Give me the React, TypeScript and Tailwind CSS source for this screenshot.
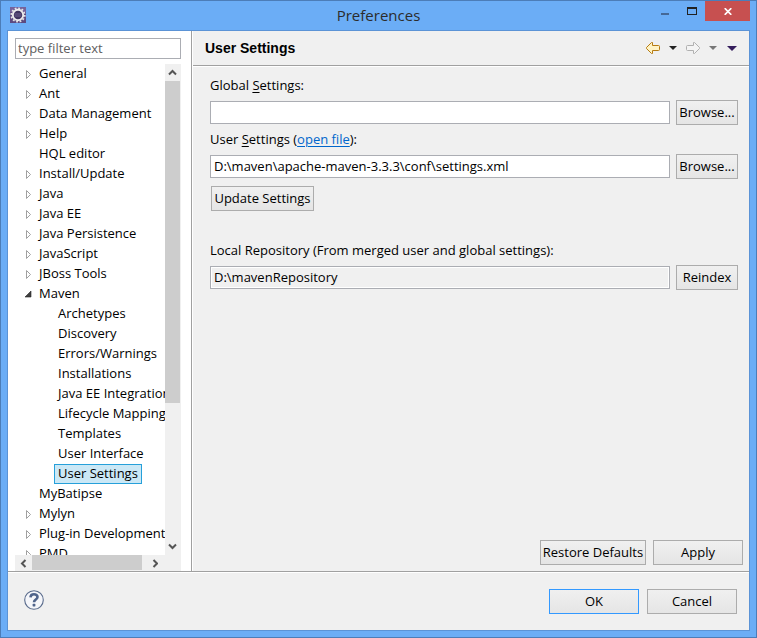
import { useState } from "react";
import type { ButtonHTMLAttributes } from "react";

type NodeState = "closed" | "open" | "leaf";
type TreeEntry = { label: string; state: NodeState; child?: boolean };

const entries: TreeEntry[] = [
  { label: "General", state: "closed" },
  { label: "Ant", state: "closed" },
  { label: "Data Management", state: "closed" },
  { label: "Help", state: "closed" },
  { label: "HQL editor", state: "leaf" },
  { label: "Install/Update", state: "closed" },
  { label: "Java", state: "closed" },
  { label: "Java EE", state: "closed" },
  { label: "Java Persistence", state: "closed" },
  { label: "JavaScript", state: "closed" },
  { label: "JBoss Tools", state: "closed" },
  { label: "Maven", state: "open" },
  { label: "Archetypes", state: "leaf", child: true },
  { label: "Discovery", state: "leaf", child: true },
  { label: "Errors/Warnings", state: "leaf", child: true },
  { label: "Installations", state: "leaf", child: true },
  { label: "Java EE Integration", state: "leaf", child: true },
  { label: "Lifecycle Mappings", state: "leaf", child: true },
  { label: "Templates", state: "leaf", child: true },
  { label: "User Interface", state: "leaf", child: true },
  { label: "User Settings", state: "leaf", child: true },
  { label: "MyBatipse", state: "leaf" },
  { label: "Mylyn", state: "closed" },
  { label: "Plug-in Development", state: "closed" },
  { label: "PMD", state: "closed" },
];

function PushButton({ className = "", ...rest }: ButtonHTMLAttributes<HTMLButtonElement>) {
  return (
    <button
      type="button"
      className={`h-[25px] shrink-0 whitespace-nowrap border bg-linear-to-b from-[#f0f0f0] to-[#e5e5e5] pb-px text-center leading-5 ${className}`}
      {...rest}
    />
  );
}

function Twisty({ state }: { state: NodeState }) {
  return (
    <svg width="10" height="10" viewBox="0 0 10 10" className="shrink-0" aria-hidden="true">
      {state === "closed" && <path d="M3.5 1.5v8l4-4z" fill="#fff" stroke="#a0a0a0" />}
      {state === "open" && <path d="M8 2v6H2z" fill="#404040" stroke="#262626" strokeWidth=".6" />}
    </svg>
  );
}

function Chevron({ d, label, className }: { d: string; label: string; className: string }) {
  return (
    <button type="button" aria-label={label} className={`flex shrink-0 items-center justify-center bg-[#f0f0f0] ${className}`}>
      <svg width="9" height="9" viewBox="0 0 9 9" fill="none" stroke="#555" strokeWidth="2" aria-hidden="true">
        <path d={d} />
      </svg>
    </button>
  );
}

function EclipseLogo() {
  return (
    <svg width="16" height="16" viewBox="0 0 16 16" aria-hidden="true">
      <rect width="16" height="16" fill="#5d4a80" />
      <rect width="16" height="5" fill="#75639b" />
      <circle cx="8" cy="8" r="6.7" fill="none" stroke="#e4e4e4" strokeWidth="1.8" strokeDasharray="1.8 1.708" />
      <circle cx="8" cy="8" r="5.2" fill="#40345f" stroke="#ecebec" strokeWidth="1.9" />
      <path d="M4.5 7h7M4.5 9h7" stroke="#6e6190" />
    </svg>
  );
}

function ToolArrow({ back = false }: { back?: boolean }) {
  return (
    <svg width="16" height="14" viewBox="0 0 16 14" strokeLinejoin="round" aria-hidden="true">
      {back ? (
        <path d="M7.5 1.5v3h6a1 1 0 0 1 1 1v3a1 1 0 0 1-1 1h-6v3h-1l-5-5v-1l5-5z" fill="#fff3c4" stroke="#b67b12" />
      ) : (
        <path d="M8.5 1.5v3h-6a1 1 0 0 0-1 1v3a1 1 0 0 0 1 1h6v3h1l5-5v-1l-5-5z" fill="#f4f4f4" stroke="#b0b0b0" />
      )}
    </svg>
  );
}

function DropMark({ fill }: { fill: string }) {
  return (
    <svg width="8" height="4" viewBox="0 0 8 4" aria-hidden="true">
      <path d="M0 0h8L4 4z" fill={fill} />
    </svg>
  );
}

const field = "h-[23px] min-w-0 flex-1 border border-[#abadb3] px-[3px] pb-px leading-5 outline-none";

export default function App() {
  const [filter, setFilter] = useState("");
  const [globalFile, setGlobalFile] = useState("");
  const [userFile, setUserFile] = useState("D:\\maven\\apache-maven-3.3.3\\conf\\settings.xml");
  const [selected, setSelected] = useState("User Settings");

  return (
    <div className="flex h-screen flex-col border border-[#4c7db8] bg-[#6badf6] font-['Open_Sans','Noto_Sans',sans-serif] text-[13px] leading-5 text-black">
      <header className="flex h-[29px] shrink-0 items-center">
        <div className="flex w-[150px] pb-px pl-[9px]">
          <EclipseLogo />
        </div>
        <h1 className="flex-1 pb-px text-center text-[15px] text-[#2c2c2c]">Preferences</h1>
        <div className="flex w-[150px] justify-end self-start pr-[6px]">
          <button type="button" aria-label="Minimize" className="flex h-5 w-[27px] items-center justify-center">
            <svg width="8" height="8" viewBox="0 0 8 8" aria-hidden="true">
              <path d="M0 6h8v2H0z" fill="#456896" />
            </svg>
          </button>
          <button type="button" aria-label="Maximize" className="flex h-5 w-[27px] items-center justify-center">
            <svg width="10" height="8" viewBox="0 0 10 8" aria-hidden="true">
              <path d="M0 0h10v8H0zM1 2v5h8V2z" fill="#222" fillRule="evenodd" />
            </svg>
          </button>
          <button type="button" aria-label="Close" className="flex h-5 w-[45px] items-center justify-center bg-[#c75050]">
            <svg width="8" height="7" viewBox="0 0 8 7" aria-hidden="true">
              <path d="M.7.2l6.6 6.6M7.3.2L.7 6.8" stroke="#fff" strokeWidth="1.7" />
            </svg>
          </button>
        </div>
      </header>

      <div className="mx-[6px] mb-[6px] flex min-h-0 flex-1 flex-col border border-[#5b93d6] bg-[#f0f0f0]">
        <div className="flex min-h-0 flex-1">
          <nav className="flex w-[184px] shrink-0 flex-col border-r border-[#a0a0a0] bg-white pl-[7px] pr-[10px] pt-[7px]">
            <input
              aria-label="type filter text"
              placeholder="type filter text"
              value={filter}
              onChange={(e) => setFilter(e.target.value)}
              className="mb-[5px] h-[21px] w-full shrink-0 border border-[#abadb3] px-[2px] pb-px leading-[18px] outline-none placeholder:text-[#606060]"
            />
            <div className="flex min-h-0 flex-1">
              <div className="flex min-w-0 flex-1 flex-col">
                <ul className="min-h-0 flex-1 overflow-hidden">
                  {entries.map((e) => (
                    <li key={e.label} className={`flex h-5 items-center ${e.child ? "pl-[29px]" : "pl-2"}`}>
                      <Twisty state={e.state} />
                      <button
                        type="button"
                        onClick={() => setSelected(e.label)}
                        className={`h-5 whitespace-nowrap border px-[3px] pb-px leading-[17px] ${e.child ? "" : "ml-[2px]"} ${
                          selected === e.label ? "border-[#26a0da] bg-[#cbe8f6]" : "border-transparent"
                        }`}
                      >
                        {e.label}
                      </button>
                    </li>
                  ))}
                </ul>
                <div className="flex h-4 shrink-0 bg-[#f0f0f0]">
                  <Chevron d="M6.5 1L3 4.5 6.5 8" label="Scroll left" className="w-[17px]" />
                  <div className="mb-px w-[110px] bg-[#cdcdcd]" />
                  <Chevron d="M4.5 1L8 4.5 4.5 8" label="Scroll right" className="flex-1" />
                </div>
              </div>
              <div className="flex w-4 shrink-0 flex-col bg-[#f0f0f0] pb-4">
                <Chevron d="M1 6.5L4.5 3 8 6.5" label="Scroll up" className="mr-px h-[17px]" />
                <div className="mr-px h-[322px] bg-[#cdcdcd]" />
                <Chevron d="M1 2.5L4.5 6 8 2.5" label="Scroll down" className="mr-px mt-auto h-[17px]" />
              </div>
            </div>
          </nav>

          <main className="flex min-w-0 flex-1 flex-col border-l border-white">
            <div className="flex h-[35px] shrink-0 items-center justify-between border-b border-[#a0a0a0] pl-3 pr-3">
              <h2 className="font-['Liberation_Sans',sans-serif] text-[14px] font-bold">User Settings</h2>
              <div className="flex items-center gap-2">
                <button type="button" aria-label="Back"><ToolArrow back /></button>
                <button type="button" aria-label="Back history"><DropMark fill="#222" /></button>
                <button type="button" aria-label="Forward"><ToolArrow /></button>
                <button type="button" aria-label="Forward history"><DropMark fill="#777" /></button>
                <button type="button" aria-label="View menu" className="ml-[2px]">
                  <svg width="10" height="5" viewBox="0 0 10 5" aria-hidden="true">
                    <path d="M0 0h10L5 5z" fill="#341d5c" />
                  </svg>
                </button>
              </div>
            </div>

            <div className="flex min-h-0 flex-1 flex-col border-t border-white">
              <form className="flex flex-col gap-1 pl-[17px] pr-[11px] pt-[9px]">
                <label htmlFor="global" className="pb-px leading-[19px]">Global <u className="underline-offset-2">S</u>ettings:</label>
                <div className="flex items-center gap-[6px]">
                  <input id="global" value={globalFile} onChange={(e) => setGlobalFile(e.target.value)} className={`${field} bg-white`} />
                  <PushButton className="w-[62px] border-[#acacac]">Browse...</PushButton>
                </div>
                <label htmlFor="user" className="mt-[1px] pb-px leading-[19px]">
                  User <u className="underline-offset-2">S</u>ettings (
                  <a href="#settings" className="text-[#0066cc] underline underline-offset-2">open file</a>):
                </label>
                <div className="flex items-center gap-[6px]">
                  <input id="user" value={userFile} onChange={(e) => setUserFile(e.target.value)} className={`${field} bg-white`} />
                  <PushButton className="w-[62px] border-[#acacac]">Browse...</PushButton>
                </div>
                <PushButton className="ml-[1px] mt-[3px] w-[103px] self-start border-[#acacac]">Update Settings</PushButton>
                <label htmlFor="local" className="mt-[26px] pb-px leading-[19px]">Local Repository (From merged user and global settings):</label>
                <div className="flex items-center gap-[6px]">
                  <input id="local" readOnly value={"D:\\mavenRepository"} className={`${field} bg-[#f0f0f0] inset-ring inset-ring-white`} />
                  <PushButton className="w-[62px] border-[#acacac]">Reindex</PushButton>
                </div>
              </form>
              <div className="mt-auto flex justify-end gap-[7px] pb-[6px] pr-[6px]">
                <PushButton className="w-[106px] border-[#acacac]">Restore Defaults</PushButton>
                <PushButton className="w-[90px] border-[#acacac]">Apply</PushButton>
              </div>
            </div>
          </main>
        </div>

        <footer className="shrink-0 border-t border-[#a0a0a0]">
          <div className="flex h-[58px] items-center justify-between border-t border-white pl-4 pr-3">
            <button type="button" aria-label="Help" className="pb-1">
              <svg width="20" height="20" viewBox="0 0 20 20" fill="none" aria-hidden="true">
                <circle cx="10" cy="10" r="9.3" fill="#f5f6fa" stroke="#596b8c" strokeWidth="1.1" />
                <path d="M6.5 7.4C6.6 5.3 8 4.2 10 4.2s3.5 1.1 3.5 2.8c0 2.5-3.5 2.5-3.5 5.2" stroke="#50648b" strokeWidth="2.6" />
                <rect x="8.6" y="13.8" width="2.8" height="2.6" rx=".6" fill="#50648b" />
              </svg>
            </button>
            <div className="flex gap-2 pb-px">
              <PushButton className="w-[90px] border-[#3399ff]">OK</PushButton>
              <PushButton className="w-[90px] border-[#acacac]">Cancel</PushButton>
            </div>
          </div>
        </footer>
      </div>
    </div>
  );
}
